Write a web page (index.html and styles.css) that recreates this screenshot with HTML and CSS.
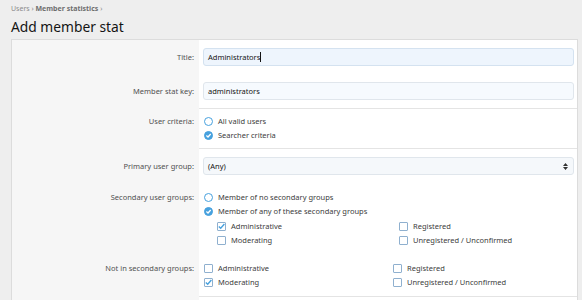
FILE: index.html
```html
<!DOCTYPE html>
<html lang="en">
<head>
  <meta charset="UTF-8" />
  <title>Add member stat</title>
  <link rel="stylesheet" href="styles.css">
</head>
<body>
  <div class="breadcrumb">
    <a>Users</a> <span class="sep">›</span> <a class="strong">Member statistics</a> <span class="sep">›</span>
  </div>
  <h1>Add member stat</h1>

  <div class="block">
    <div class="form-row">
      <div class="label">Title:</div>
      <div class="field"><div class="input focused">Administrators<span class="caret"></span></div></div>
    </div>
    <div class="form-row line">
      <div class="label">Member stat key:</div>
      <div class="field"><div class="input">administrators</div></div>
    </div>
    <div class="form-row choices criteria line">
      <div class="label">User criteria:</div>
      <div class="field">
        <div class="choice"><span class="radio"></span>All valid users</div>
        <div class="choice"><span class="radio on"></span>Searcher criteria</div>
      </div>
    </div>
    <div class="form-row">
      <div class="label">Primary user group:</div>
      <div class="field">
        <div class="input select">(Any)
          <svg class="arrows" width="5" height="7" viewBox="0 0 5 7"><path d="M0 3 L2.5 0 L5 3 Z M0 4 L2.5 7 L5 4 Z" fill="#333"/></svg>
        </div>
      </div>
    </div>
    <div class="form-row choices secondary">
      <div class="label">Secondary user groups:</div>
      <div class="field">
        <div class="choice"><span class="radio"></span>Member of no secondary groups</div>
        <div class="choice"><span class="radio on"></span>Member of any of these secondary groups</div>
        <div class="groups nested">
          <div class="choice"><span class="check on"></span>Administrative</div>
          <div class="choice"><span class="check"></span>Registered</div>
          <div class="choice"><span class="check"></span>Moderating</div>
          <div class="choice"><span class="check"></span>Unregistered / Unconfirmed</div>
        </div>
      </div>
    </div>
    <div class="form-row choices line">
      <div class="label">Not in secondary groups:</div>
      <div class="field">
        <div class="groups">
          <div class="choice"><span class="check"></span>Administrative</div>
          <div class="choice"><span class="check"></span>Registered</div>
          <div class="choice"><span class="check on"></span>Moderating</div>
          <div class="choice"><span class="check"></span>Unregistered / Unconfirmed</div>
        </div>
      </div>
    </div>
    <div class="form-row">
      <div class="label"></div>
      <div class="field"></div>
    </div>
  </div>
</body>
</html>
```

FILE: styles.css
```css
body {
  margin: 0;
  padding: 0 4px 0 11px;
  background: #eeeeee;
  font-family: 'Noto Sans', 'Open Sans', sans-serif;
  font-size: 7.5px;
  color: #141414;
}

.breadcrumb {
  padding-top: 4px;
  height: 11px;
  font-size: 7px;
  color: #8c8c8c;
}

.breadcrumb .strong {
  font-weight: bold;
  color: #6e6e6e;
}

h1 {
  margin: 2px 0 0 0;
  height: 22px;
  font-size: 13.8px;
  font-weight: normal;
  color: #141414;
}

.block {
  border: 1px solid #dcdcdc;
  border-bottom: none;
  background: linear-gradient(to right, #f6f6f6 187px, #ffffff 187px);
}

.form-row {
  display: grid;
  grid-template-columns: 187px 1fr;
}

.form-row.line .field {
  border-bottom: 1px solid #e4e4e4;
}

.label {
  padding: 8px 5px 8px 0;
  text-align: right;
  color: #505050;
  line-height: 18px;
}

.field {
  padding: 8px 3px 8px 4px;
}

.choices .label {
  padding: 6px 5px 7px 0;
  line-height: 14px;
}

.choices .field {
  padding: 6px 3px 7px 4px;
}

.criteria .label,
.criteria .field {
  padding-top: 5px;
  padding-bottom: 6px;
}

.secondary .label,
.secondary .field {
  padding-top: 7px;
  padding-bottom: 8px;
}

.input {
  height: 16px;
  line-height: 16px;
  padding: 0 4px;
  border: 1px solid #e0e6ec;
  border-radius: 3px;
  background: #f6fafe;
  color: #141414;
}

.input.focused {
  background: #eef5fd;
  border-color: #d4e2f0;
}

.caret {
  display: inline-block;
  width: 1px;
  height: 10px;
  background: #141414;
  vertical-align: -2px;
}

.select {
  display: flex;
  justify-content: space-between;
  align-items: center;
  background: #f5f8fb;
  padding-right: 5px;
}

.choice {
  display: flex;
  align-items: center;
  height: 14px;
  color: #3c3c3c;
}

.radio {
  width: 7px;
  height: 7px;
  border: 1px solid #47a1de;
  border-radius: 50%;
  margin: 0 5px 0 1px;
  background: #fff;
}

.radio.on {
  background: #47a1de url("data:image/svg+xml,%3Csvg xmlns='http://www.w3.org/2000/svg' viewBox='0 0 9 9'%3E%3Cpath d='M2.4 4.6 L4 6 L6.7 3' stroke='white' stroke-width='1.3' fill='none'/%3E%3C/svg%3E") center/9px 9px no-repeat;
}

.check {
  width: 7px;
  height: 7px;
  border: 1px solid #8fb0cf;
  border-radius: 1px;
  margin: 0 5px 0 1px;
  background: #fff;
}

.check.on {
  background: #fff url("data:image/svg+xml,%3Csvg xmlns='http://www.w3.org/2000/svg' viewBox='0 0 9 9'%3E%3Cpath d='M1.8 4.4 L3.7 6.2 L7.4 2' stroke='%2347a1de' stroke-width='1.4' fill='none'/%3E%3C/svg%3E") center/9px 9px no-repeat;
}

.groups {
  display: grid;
  grid-template-columns: 189px 1fr;
}

.groups.nested {
  margin-left: 13px;
  margin-top: 1px;
  grid-template-columns: 182px 1fr;
}
```
